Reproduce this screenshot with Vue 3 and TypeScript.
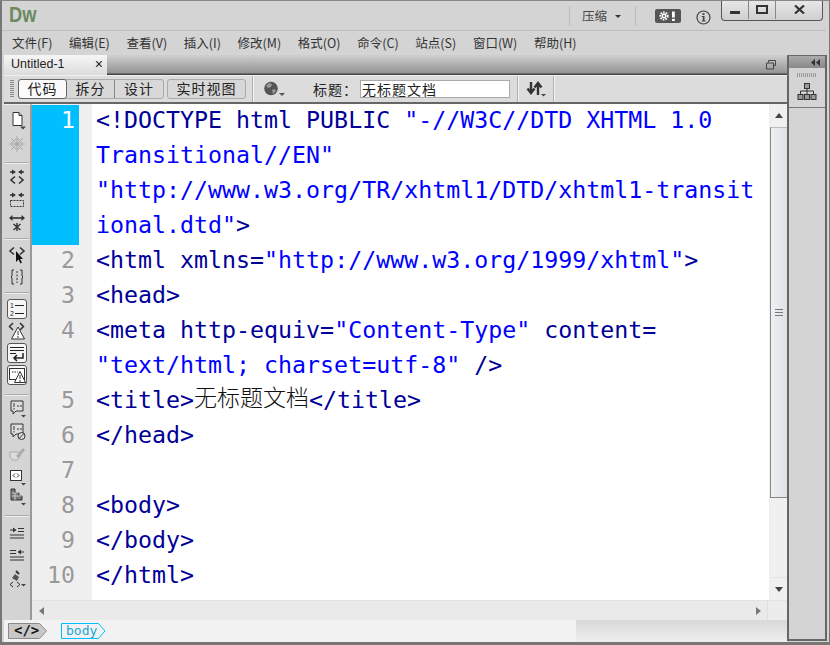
<script setup lang="ts">
const menus = ['文件(F)', '编辑(E)', '查看(V)', '插入(I)', '修改(M)', '格式(O)', '命令(C)', '站点(S)', '窗口(W)', '帮助(H)']
</script>

<template>
  <div class="win">
    <header class="title">
      <span class="logo">Dw</span>
      <div class="title-right">
        <div class="compact">压缩<i class="caret"></i></div>
        <div class="gear"><svg width="26" height="14" viewBox="0 0 26 14"><rect width="26" height="14" rx="2" fill="#555"/><circle cx="9" cy="7" r="3.600" fill="none" stroke="#fff" stroke-width="2" stroke-dasharray="1.600 1"/><circle cx="9" cy="7" r="2.400" fill="#fff"/><circle cx="9" cy="7" r="1" fill="#555"/><rect x="17" y="2.500" width="2.800" height="6" fill="#fff"/><rect x="17" y="9.800" width="2.800" height="2.200" fill="#fff"/></svg></div>
        <div class="info"><svg width="15" height="15" viewBox="0 0 15 15"><circle cx="7.500" cy="7.500" r="6.500" fill="none" stroke="#444" stroke-width="1.200"/><rect x="6.500" y="3.200" width="2" height="1.800" fill="#444"/><path d="M5.800 6h2.700v4.500h1v1h-3.700v-1h1V7h-1z" fill="#444"/></svg></div>
        <div class="winbtns">
          <div class="wb b1"><span class="min"></span></div>
          <div class="wb b2"><span class="max"></span></div>
          <div class="wb b3"><svg width="11" height="9" viewBox="0 0 11 9"><path d="M1 .5 10 8.500M10 .5 1 8.500" stroke="#333" stroke-width="2.200" fill="none"/></svg></div>
        </div>
      </div>
    </header>
    <nav class="menu"><span v-for="m in menus" :key="m">{{ m }}</span></nav>
    <div class="workspace">
      <div class="main">
        <div class="tabs">
          <div class="tab"><span>Untitled-1</span><b>×</b></div>
          <svg class="restore" width="10" height="10" viewBox="0 0 10 10"><path d="M2.500 2.500v-2h7v5h-2M.5 3h7v6h-7z" fill="none" stroke="#444"/></svg>
        </div>
        <div class="tools">
          <div class="grip"></div>
          <div class="seg">
            <span class="on">代码</span><span>拆分</span><span>设计</span>
          </div>
          <div class="seg live"><span>实时视图</span></div>
          <div class="sep"></div>
          <svg class="globe" width="22" height="16" viewBox="0 0 22 16"><circle cx="7" cy="7.500" r="6.800" fill="#555"/><path d="M2 5l3-3 3 1-1 3-3 1zM8 9l3-1 1 2-3 3z" fill="#999"/><path d="M15 12h6l-3 3z" fill="#555"/></svg>
          <span class="label">标题：</span>
          <span class="doc-title">无标题文档</span>
          <div class="sep s2"></div>
          <svg class="sort" width="20" height="16" viewBox="0 0 20 16"><path d="M5 1v10M1.500 7.500 5 12l3.500-4.500M12 14V3M8.500 6.500 12 2l3.500 4.500" stroke="#333" stroke-width="2.400" fill="none"/><path d="M15 13h5l-2.500 2.500z" fill="#444"/></svg>
          <div class="sep s3"></div>
        </div>
        <div class="body">
          <aside class="side">
            <div class="grp g1">
              <svg class="ic" viewBox="0 0 20 20"><path d="M6 2.500h6l3 3v10H6z" fill="#fff" stroke="#333"/><path d="M12 2.500v3h3" fill="#ccc" stroke="#333"/><path d="M13 16.500h6l-3 3z" fill="#444"/></svg>
              <svg class="ic" viewBox="0 0 20 20"><g stroke="#aaa" fill="none"><circle cx="10" cy="10" r="5"/><circle cx="10" cy="10" r="2"/><path d="M10 2v16M2 10h16M4 4l12 12M16 4 4 16"/></g></svg>
            </div>
            <div class="grp g2">
              <svg class="ic" viewBox="0 0 20 20"><path d="M3 5h3M17 5h-3M8 9.500l-4 3.500 4 3.500M12 9.500l4 3.500-4 3.500" fill="none" stroke="#333" stroke-width="1.600"/><path d="M5 2.500 9 5l-4 2.500zM15 2.500 11 5l4 2.500z" fill="#333"/></svg>
              <svg class="ic" viewBox="0 0 20 20"><path d="M3 5h3M17 5h-3" fill="none" stroke="#333" stroke-width="1.600"/><path d="M5 2.500 9 5l-4 2.500zM15 2.500 11 5l4 2.500z" fill="#333"/><rect x="3.500" y="10.500" width="13" height="6" fill="none" stroke="#333" stroke-dasharray="2 1"/></svg>
              <svg class="ic" viewBox="0 0 20 20"><path d="M5 5h10" fill="none" stroke="#333" stroke-width="1.600"/><path d="M5.500 2 2 5l3.500 3zM14.500 2 18 5l-3.500 3z" fill="#333"/><path d="M6.500 11l7 6M13.500 11l-7 6M10 10v8" fill="none" stroke="#333" stroke-width="1.400"/></svg>
            </div>
            <div class="grp g3">
              <svg class="ic" viewBox="0 0 20 20"><path d="M7 2.500 3 6l4 3.500M13 2.500 17 6l-4 3.500" fill="none" stroke="#333" stroke-width="1.600"/><path d="M9 6v11l2.500-2.500 2 4 1.500-1-2-3.500H16z" fill="#111"/></svg>
              <svg class="ic" viewBox="0 0 20 20"><path d="M7 3H5v6l-1 1 1 1v6h2M13 3h2v6l1 1-1 1v6h-2" fill="none" stroke="#333"/><path d="M10 4v12" stroke="#333" stroke-dasharray="2 1.500" fill="none"/></svg>
            </div>
            <div class="grp g4">
              <div class="pressed"><svg viewBox="0 0 18 18"><text x="2" y="8" font-size="7" font-family="Liberation Sans" fill="#222">1</text><text x="2" y="16" font-size="7" font-family="Liberation Sans" fill="#222">2</text><path d="M7 5.500h9M7 13.500h9" stroke="#222" fill="none"/></svg></div>
              <svg class="ic" viewBox="0 0 20 20"><path d="M6 2 2.500 5.500 6 9M13 2l3.500 3.500L13 9" fill="none" stroke="#333" stroke-width="1.500"/><path d="M11 6l6.500 12h-13z" fill="#fff" stroke="#333"/><path d="M11 10v4M11 15v2" stroke="#333"/></svg>
              <div class="pressed"><svg viewBox="0 0 18 18"><path d="M2 3.500h14M2 6.500h14M2 9.500h6" stroke="#222" fill="none"/><path d="M15 9v5H6M9 11l-3 3 3 3" stroke="#222" stroke-width="1.500" fill="none"/></svg></div>
              <div class="pressed p4"><svg viewBox="0 0 18 18"><rect x="1.500" y="2.500" width="15" height="11" fill="#fff" stroke="#333"/><path d="M4 6h6" stroke="#333" stroke-dasharray="1.500 1"/><path d="M12 5.500l5.500 11h-11z" fill="#fff" stroke="#333"/><path d="M12 9v4M12 14v2" stroke="#333"/></svg></div>
            </div>
            <div class="grp g5">
              <svg class="ic" viewBox="0 0 20 20"><path d="M4 3h12v10H9l-3 3v-3H4z" fill="#ddd" stroke="#333"/><path d="M7 5v4M7 10v1.500M10 8h2M13 8h2" stroke="#333"/><path d="M14 17h5l-2.500 2.500z" fill="#444"/></svg>
              <svg class="ic" viewBox="0 0 20 20"><path d="M4 3h12v10H9l-3 3v-3H4z" fill="#ddd" stroke="#333"/><path d="M7 5v4M7 10v1.500M10 8h2M13 8h2" stroke="#333"/><circle cx="14.500" cy="15" r="3.500" fill="#ddd" stroke="#333"/><path d="M12 17.500l5-5" stroke="#333"/></svg>
              <svg class="ic" viewBox="0 0 20 20"><path d="M3 8h8l3 3-4 5H6l-3-3z" fill="#ddd" stroke="#aaa"/><path d="M9 12l7-8 2 2-7 8z" fill="#aaa"/></svg>
              <svg class="ic" viewBox="0 0 20 20"><rect x="3.500" y="3.500" width="11" height="10" fill="#fff" stroke="#333"/><path d="M8 6.500 6 8.500l2 2M10 6.500l2 2-2 2" stroke="#333" fill="none"/><path d="M14 16h5l-2.500 2.500z" fill="#444"/></svg>
              <svg class="ic tight" viewBox="0 0 20 20"><path d="M4 2h4v4h4v3h3v4H4z" fill="#777" stroke="#333"/><path d="M4.500 6h7M4.500 9h10M8 6v7" fill="none" stroke="#ccc"/><path d="M14 16h5l-2.500 2.500z" fill="#444"/></svg>
            </div>
            <div class="grp last">
              <svg class="ic" viewBox="0 0 20 20"><path d="M3 5h5M11 3.500h6M11 6.500h6M3 10h14M3 13h14" stroke="#333" stroke-width="1.200" fill="none"/><path d="M6 2.500 9.500 5 6 7.500z" fill="#333"/></svg>
              <svg class="ic" viewBox="0 0 20 20"><path d="M3 3.500h6M3 6.500h6M17 5h-4M3 10h14M3 13h14" stroke="#333" stroke-width="1.200" fill="none"/><path d="M14 2.500 10.500 5 14 7.500z" fill="#333"/></svg>
              <svg class="ic" viewBox="0 0 20 20"><path d="M8 5l4 3-2 4-5-3z" fill="#555"/><path d="M9 2l3 3" stroke="#333" stroke-width="2"/><path d="M6 13l-3 2.500L6 18M10 13l3 2.500L10 18" stroke="#333" fill="none"/><path d="M14 15h5l-2.500 2.500z" fill="#444"/></svg>
            </div>
          </aside>
          <div class="editor">
            <div class="code-row">
              <div class="gutter">
                <div class="n hl">1</div>
                <div class="n">2</div><div class="n">3</div><div class="n tall">4</div>
                <div class="n">5</div><div class="n">6</div><div class="n">7</div><div class="n">8</div><div class="n">9</div><div class="n">10</div>
              </div>
              <div class="code">
                <div class="ln"><span class="t">&lt;!DOCTYPE html PUBLIC </span><span class="s">"-//W3C//DTD XHTML 1.0</span></div>
                <div class="ln"><span class="s">Transitional//EN"</span></div>
                <div class="ln"><span class="s">"http://www.w3.org/TR/xhtml1/DTD/xhtml1-transit</span></div>
                <div class="ln"><span class="s">ional.dtd"</span><span class="t">&gt;</span></div>
                <div class="ln"><span class="t">&lt;html xmlns=</span><span class="s">"http://www.w3.org/1999/xhtml"</span><span class="t">&gt;</span></div>
                <div class="ln"><span class="t">&lt;head&gt;</span></div>
                <div class="ln"><span class="t">&lt;meta http-equiv=</span><span class="s">"Content-Type"</span><span class="t"> content=</span></div>
                <div class="ln"><span class="s">"text/html; charset=utf-8"</span><span class="t"> /&gt;</span></div>
                <div class="ln"><span class="t">&lt;title&gt;</span><span class="cjk">无标题文档</span><span class="t">&lt;/title&gt;</span></div>
                <div class="ln"><span class="t">&lt;/head&gt;</span></div>
                <div class="ln"></div>
                <div class="ln"><span class="t">&lt;body&gt;</span></div>
                <div class="ln"><span class="t">&lt;/body&gt;</span></div>
                <div class="ln"><span class="t">&lt;/html&gt;</span></div>
              </div>
              <div class="vscroll">
                <div class="arrow"><i class="up"></i></div>
                <div class="thumb"><span class="lines"></span></div>
                <div class="track"></div>
                <div class="arrow bottom"><i class="down"></i></div>
              </div>
            </div>
            <div class="hscroll">
              <div class="htrack"><i class="left"></i><i class="right"></i></div>
            </div>
          </div>
        </div>
        <footer class="status">
          <div class="tag codetag">
            <svg class="tagbg" width="39" height="16" viewBox="0 0 39 16"><path d="M.5.500h31l7 7.500-7 7.500H.5z" fill="#c8c8c8" stroke="#8a8a8a"/></svg>
            <span>&lt;/&gt;</span>
          </div>
          <div class="tag bodytag">
            <svg class="tagbg" width="45" height="16" viewBox="0 0 45 16"><path d="M.5.500h37l6.500 7.500-6.500 7.500H.5z" fill="none" stroke="#00bfff"/></svg>
            <span>body</span>
          </div>
          <div class="status-fill"></div>
        </footer>
      </div>
      <div class="panel">
        <div class="panel-head"><svg width="9" height="7" viewBox="0 0 9 7"><path d="M4 0v7L0 3.500zM9 0v7L5 3.500z" fill="#333"/></svg></div>
        <div class="panel-box">
          <div class="dots"></div>
          <svg width="20" height="17" viewBox="0 0 20 17"><path d="M10 5v3M3.500 12V8h13v4M10 8v4" stroke="#333" fill="none"/><rect x="7.500" y="0.500" width="5" height="5" fill="#999" stroke="#333"/><rect x="1" y="11.500" width="5" height="5" fill="#999" stroke="#333"/><rect x="7.500" y="11.500" width="5" height="5" fill="#999" stroke="#333"/><rect x="14" y="11.500" width="5" height="5" fill="#999" stroke="#333"/></svg>
        </div>
      </div>
    </div>
  </div>
</template>

<style>
html, body { margin: 0; background: #d4d4d4; overflow: hidden; }
</style>

<style scoped>
.win { width: 830px; height: 645px; box-sizing: border-box; display: flex; flex-direction: column; background: #d4d4d4; border-style: solid; border-color: #777; border-width: 1px 1px 3px 2px; border-top-color: #888; font-family: "Noto Sans CJK SC", "Liberation Sans", sans-serif; overflow: hidden; }
.title { height: 30px; width: 824px; flex: none; box-sizing: border-box; display: flex; align-items: flex-start; justify-content: space-between; border-bottom: 1px solid #bdbdbd; }
.logo { font: bold 22px/24px "Liberation Sans", sans-serif; color: #6b8a5f; margin: 2px 0 0 7px; transform: scaleX(.83); transform-origin: left center; }
.title-right { display: flex; align-items: flex-start; margin-right: 3px; }
.compact { width: 67px; height: 20px; margin-top: 5px; border-left: 1px solid #bbb; border-right: 1px solid #bbb; font-size: 12.500px; line-height: 18px; color: #444; padding-left: 12px; box-sizing: border-box; display: flex; align-items: center; }
.caret { width: 0; height: 0; border: 3px solid transparent; border-top: 3px solid #333; border-bottom: 0; margin-left: 8px; }
.gear { margin: 8px 0 0 19px; line-height: 0; }
.info { margin: 9px 0 0 15px; line-height: 0; }
.winbtns { display: flex; margin: -1px 0 0 10px; height: 20px; border: 1px solid #555; border-top: 0; border-radius: 0 0 4px 4px; background: linear-gradient(#e8e8e8, #cfcfcf); }
.wb { display: flex; align-items: center; justify-content: center; border-right: 1px solid #888; height: 19px; }
.b1 { width: 26px; } .b2 { width: 26px; } .b3 { width: 46px; border-right: 0; }
.min { width: 10px; height: 3px; background: #333; margin-top: 6px; }
.max { width: 8px; height: 5px; border: 2px solid #333; }
.menu { height: 24px; flex: none; box-sizing: border-box; display: flex; align-items: center; padding: 0 0 2px 10px; font-size: 12.500px; color: #333; }
.menu span { margin-right: 16.670px; white-space: nowrap; }
.workspace { display: flex; height: 587px; flex: none; }
.main { width: 785px; display: flex; flex-direction: column; flex: none; }
.tabs { height: 20px; display: flex; justify-content: space-between; align-items: center; background: linear-gradient(#cfcfcf, #949494 90%, #444 95%); flex: none; margin-left: 2px; }
.tab { width: 103px; height: 20px; box-sizing: border-box; background: linear-gradient(#f6f6f6, #dcdcdc); font: 12.500px/19px "Liberation Sans", sans-serif; color: #222; display: flex; justify-content: space-between; padding: 0 4px 0 7px; align-self: flex-start; }
.tab b { font-weight: normal; font-size: 14px; }
.restore { margin-right: 11px; }
.tools { height: 29px; box-sizing: border-box; background: #dcdcdc; border-bottom: 2px solid #666; border-top: 1px solid #f0f0f0; display: flex; align-items: center; flex: none; margin-left: 2px; }
.grip { width: 4px; height: 18px; margin: 0 4px 0 6px; background: repeating-linear-gradient(#888 0 1px, transparent 1px 2px); }
.seg { display: flex; height: 20px; border: 1px solid #aaa; border-radius: 3px; box-sizing: border-box; font-size: 14px; line-height: 17px; color: #222; background: #d8d8d8; }
.seg span { width: 48px; box-sizing: border-box; text-align: center; border-right: 1px solid #888; letter-spacing: 1px; }
.seg span:last-child { border-right: 0; }
.seg .on { width: 49px; background: #fbfbfb; border-radius: 3px; border: 1px solid #666; margin: -1px 0 -1px -1px; line-height: 17px; }
.live { margin-left: 3px; }
.live span { width: 77px; }
.sep { width: 1px; height: 26px; background: #b0b0b0; border-right: 1px solid #f4f4f4; margin-left: 6px; }
.globe { margin-left: 10px; }
.label { font-size: 14px; color: #222; margin-left: 27px; letter-spacing: 1px; width: 47px; flex: none; }
.doc-title { width: 150px; height: 18px; box-sizing: border-box; background: #fff; border: 1px solid #aaa; font-size: 14px; line-height: 16px; color: #222; padding-left: 1px; letter-spacing: 1px; }
.s2 { margin-left: 7px; }
.sort { margin-left: 7px; }
.s3 { margin-left: 7px; }
.body { display: flex; height: 516px; flex: none; }
.side { width: 30px; box-sizing: border-box; border-left: 2px solid #d4d4d4; border-right: 2px solid #999; border-top: 1px solid #eee; flex: none; background: #d4d4d4; padding-top: 4px; }
.grp { display: flex; flex-direction: column; align-items: center; border-bottom: 1px solid #aaa; margin: 0 1px; box-shadow: 0 1px 0 #eee; }
.g1 { gap: 4px; padding: 1px 0 8px; }
.g2 { gap: 3px; padding: 4px 0 5px; }
.g3 { gap: 2px; padding: 6px 0 5px; }
.g4 { gap: 2px; padding: 6px 0 9px; }
.g5 { gap: 3px; padding: 3px 0 8px; }
.tight { margin-top: -3px; }
.grp.last { gap: 2px; padding: 9px 0 0; border: 0; box-shadow: none; }
.ic { width: 20px; height: 20px; flex: none; }
.pressed { width: 20px; height: 20px; box-sizing: border-box; background: #f6f6f6; border: 1px solid #555; border-radius: 3px; flex: none; }
.pressed svg { display: block; width: 18px; height: 18px; }
.editor { width: 755px; display: flex; flex-direction: column; flex: none; }
.code-row { display: flex; height: 496px; flex: none; background: #fff; }
.gutter { width: 60px; background: #f0f0f0; flex: none; box-sizing: border-box; padding-top: 1px; font: 23.200px/29px "DejaVu Sans Mono", monospace; color: #999; text-align: right; }
.n { width: 43px; height: 35px; }
.n.hl { width: 47px; height: 140px; background: #00bfff; color: #fff; padding-right: 4px; box-sizing: border-box; }
.n.tall { height: 70px; }
.code { flex: 1; padding: 1px 0 0 4px; font: 23.270px/29px "DejaVu Sans Mono", monospace; white-space: pre; overflow: hidden; }
.ln { height: 35px; }
.t { color: #000099; }
.s { color: #0000ff; }
.cjk { font-family: "Noto Sans CJK SC", sans-serif; font-size: 23px; line-height: 0; color: #111; font-weight: 300; vertical-align: 2px; }
.vscroll { width: 18px; display: flex; flex-direction: column; background: #f0f0f0; flex: none; border-left: 1px solid #eee; box-sizing: border-box; }
.arrow { height: 23px; display: flex; align-items: center; justify-content: center; flex: none; box-sizing: border-box; }
.arrow.bottom { border-top: 1px solid #e4e4e4; }
.up { border: 4px solid transparent; border-bottom: 5px solid #444; border-top: 0; }
.down { border: 4px solid transparent; border-top: 5px solid #444; border-bottom: 0; }
.thumb { height: 371px; flex: none; box-sizing: border-box; background: linear-gradient(90deg, #f0f0f0, #dbe1e5); border: 1px solid #888; border-top-color: #bbb; border-right: 0; display: flex; align-items: center; justify-content: center; }
.lines { width: 8px; height: 5px; border-top: 1px solid #777; border-bottom: 1px solid #777; background: linear-gradient(#777, #777) center/100% 1px no-repeat; }
.track { flex: 1; }
.hscroll { height: 20px; background: #ececec; border-top: 1px solid #e2e2e2; box-sizing: border-box; padding-right: 19px; flex: none; }
.htrack { height: 19px; background: #eaeaea; border-right: 1px solid #e0e0e0; box-sizing: border-box; display: flex; align-items: center; justify-content: space-between; padding: 0 6px 0 7px; }
.left { border: 4px solid transparent; border-right: 5px solid #777; border-left: 0; }
.right { border: 4px solid transparent; border-left: 5px solid #777; border-right: 0; }
.status { height: 22px; flex: none; display: flex; align-items: center; background: #f2f2f2; box-sizing: border-box; margin-left: 2px; padding-left: 4px; }
.tag { position: relative; height: 16px; }
.tagbg { position: absolute; left: 0; top: 0; }
.tag span { position: relative; display: block; white-space: nowrap; }
.codetag { width: 39px; font: bold 14px/15px "DejaVu Sans Mono", monospace; color: #111; }
.codetag span { padding-left: 6px; }
.bodytag { margin-left: 14px; width: 45px; font: 13px/15px "DejaVu Sans Mono", monospace; color: #18a8d8; }
.bodytag span { padding-left: 5px; }
.status-fill { margin-left: auto; width: 211px; height: 22px; background: linear-gradient(#d8d8d8, #eee); }
.panel { width: 40px; height: 586px; flex: none; box-sizing: border-box; border: 2px solid #666; border-top-width: 1px; background: #d4d4d4; }
.panel-head { height: 12px; background: linear-gradient(#aaa, #888); display: flex; align-items: center; justify-content: flex-end; padding-right: 5px; }
.panel-box { height: 40px; box-sizing: border-box; border-bottom: 1px solid #777; display: flex; flex-direction: column; align-items: center; gap: 6px; padding-top: 5px; }
.dots { width: 20px; height: 4px; background: repeating-linear-gradient(90deg, #999 0 1px, transparent 1px 2px); }
</style>
